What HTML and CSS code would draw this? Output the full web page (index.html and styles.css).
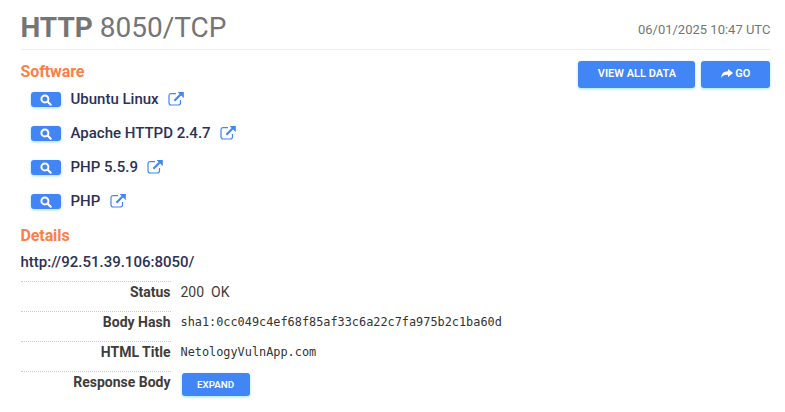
FILE: index.html
```html
<!DOCTYPE html>
<html lang="en">
<head>
<meta charset="utf-8">
<title>HTTP 8050/TCP</title>
<link rel="stylesheet" href="styles.css">
</head>
<body>
<svg width="0" height="0" class="defs" aria-hidden="true">
  <symbol id="search" viewBox="0 0 12 12"><circle cx="4.9" cy="4.9" r="3.5" fill="none" stroke="currentColor" stroke-width="2"/><path d="M7.5 7.5L10.7 10.7" stroke="currentColor" stroke-width="2.2" stroke-linecap="round"/></symbol>
  <symbol id="external" viewBox="0 0 16 14"><path d="M8 1.6H3.2Q1 1.6 1 3.8V10.8Q1 13 3.2 13H10.3Q12.5 13 12.5 10.8V8" fill="none" stroke="currentColor" stroke-width="1.2"/><path d="M6.4 8.7L12.8 2.3" stroke="currentColor" stroke-width="2.1"/><path d="M10 0H15.5V5.5Z" fill="currentColor" stroke="currentColor" stroke-width=".6"/></symbol>
  <symbol id="share" viewBox="0 0 12 10"><path d="M7 0L12 4L7 8V5.8C3.5 5.6 1.6 6.5 0.3 9C0.3 4.7 2.7 2.3 7 2.2Z" fill="currentColor"/></symbol>
</svg>
<main class="service">
  <header class="head">
    <h1 class="title"><strong>HTTP</strong> 8050/TCP</h1>
    <time class="date">06/01/2025 10:47 UTC</time>
  </header>
  <div class="overview">
    <section>
      <h2 class="section-title">Software</h2>
      <ul class="software">
        <li><button class="btn find" aria-label="Search"><svg><use href="#search"/></svg></button><span>Ubuntu Linux</span><svg class="ext"><use href="#external"/></svg></li>
        <li><button class="btn find" aria-label="Search"><svg><use href="#search"/></svg></button><span>Apache HTTPD 2.4.7</span><svg class="ext"><use href="#external"/></svg></li>
        <li><button class="btn find" aria-label="Search"><svg><use href="#search"/></svg></button><span>PHP 5.5.9</span><svg class="ext"><use href="#external"/></svg></li>
        <li><button class="btn find" aria-label="Search"><svg><use href="#search"/></svg></button><span>PHP</span><svg class="ext"><use href="#external"/></svg></li>
      </ul>
    </section>
    <div class="actions">
      <button class="btn view">VIEW ALL DATA</button>
      <button class="btn go"><svg><use href="#share"/></svg>GO</button>
    </div>
  </div>
  <section>
    <h2 class="section-title">Details</h2>
    <div class="url">http://92.51.39.106:8050/</div>
    <dl class="details">
      <dt>Status</dt><dd class="status">200&nbsp; OK</dd>
      <dt>Body Hash</dt><dd><code>sha1:0cc049c4ef68f85af33c6a22c7fa975b2c1ba60d</code></dd>
      <dt>HTML Title</dt><dd><code>NetologyVulnApp.com</code></dd>
      <dt>Response Body</dt><dd><button class="btn expand">EXPAND</button></dd>
    </dl>
  </section>
</main>
</body>
</html>
```
FILE: styles.css
```css
* { box-sizing: border-box; }
body { margin: 0; background: #fff; font-family: Roboto, sans-serif; color: #403c3c; overflow: hidden; }
.defs { display: block; position: absolute; }
h1, h2, ul, dl, dd { margin: 0; padding: 0; }
.service { padding: 0 14.6px 0 20.5px; }
.head { height: 50px; display: flex; justify-content: space-between; border-bottom: 1px solid #eee; color: #757575; }
.title { font-size: 28px; font-weight: 400; line-height: 33px; padding-top: 11px; }
.title strong { font-weight: 700; }
.date { font-size: 13px; line-height: 16px; padding-top: 22px; }
.overview { height: 175px; display: flex; justify-content: space-between; padding-top: 11px; }
.section-title { font-size: 16px; font-weight: 700; letter-spacing: -.1px; line-height: 21px; color: #ff7e47; }
.software { list-style: none; padding-left: 10px; }
.software li { height: 34px; display: flex; align-items: center; font-size: 15px; font-weight: 500; line-height: 20px; color: #2c3155; }
.software span { margin: 0 9.5px 0 10px; }
.btn { display: inline-flex; align-items: center; justify-content: center; padding: 0; border: 0; border-radius: 3px; background: #4285f6; color: #fff; font-family: inherit; font-weight: 500; box-shadow: 0 1px 3px rgba(0, 188, 255, .4); }
.find { width: 30px; height: 15px; margin-top: 1px; }
.find svg { width: 12px; height: 12px; }
.ext { width: 16px; height: 14px; color: #4285f6; }
.actions { display: flex; gap: 6px; align-items: flex-start; }
.actions .btn { height: 27px; font-size: 11px; font-weight: 600; padding-bottom: 2px; }
.view { width: 117px; }
.go { width: 69px; }
.go svg { width: 12px; height: 10px; margin-right: 2px; }
.url { font-size: 15px; font-weight: 500; line-height: 20px; margin-top: 6px; color: #2c3155; }
.details { display: grid; grid-template-columns: 150px 1fr; grid-auto-rows: 30px; column-gap: 10px; padding-top: 9px; font-size: 14px; line-height: 20px; }
.details dt { border-top: 1px dotted #ccc; text-align: right; font-weight: 700; }
.details dd { padding-top: 1px; }
.details code { display: block; font-family: "DejaVu Sans Mono", monospace; font-size: 11.87px; line-height: 20px; color: #333; }
.expand { width: 68px; height: 23px; font-size: 9.8px; font-weight: 600; margin: 1px; }
```
